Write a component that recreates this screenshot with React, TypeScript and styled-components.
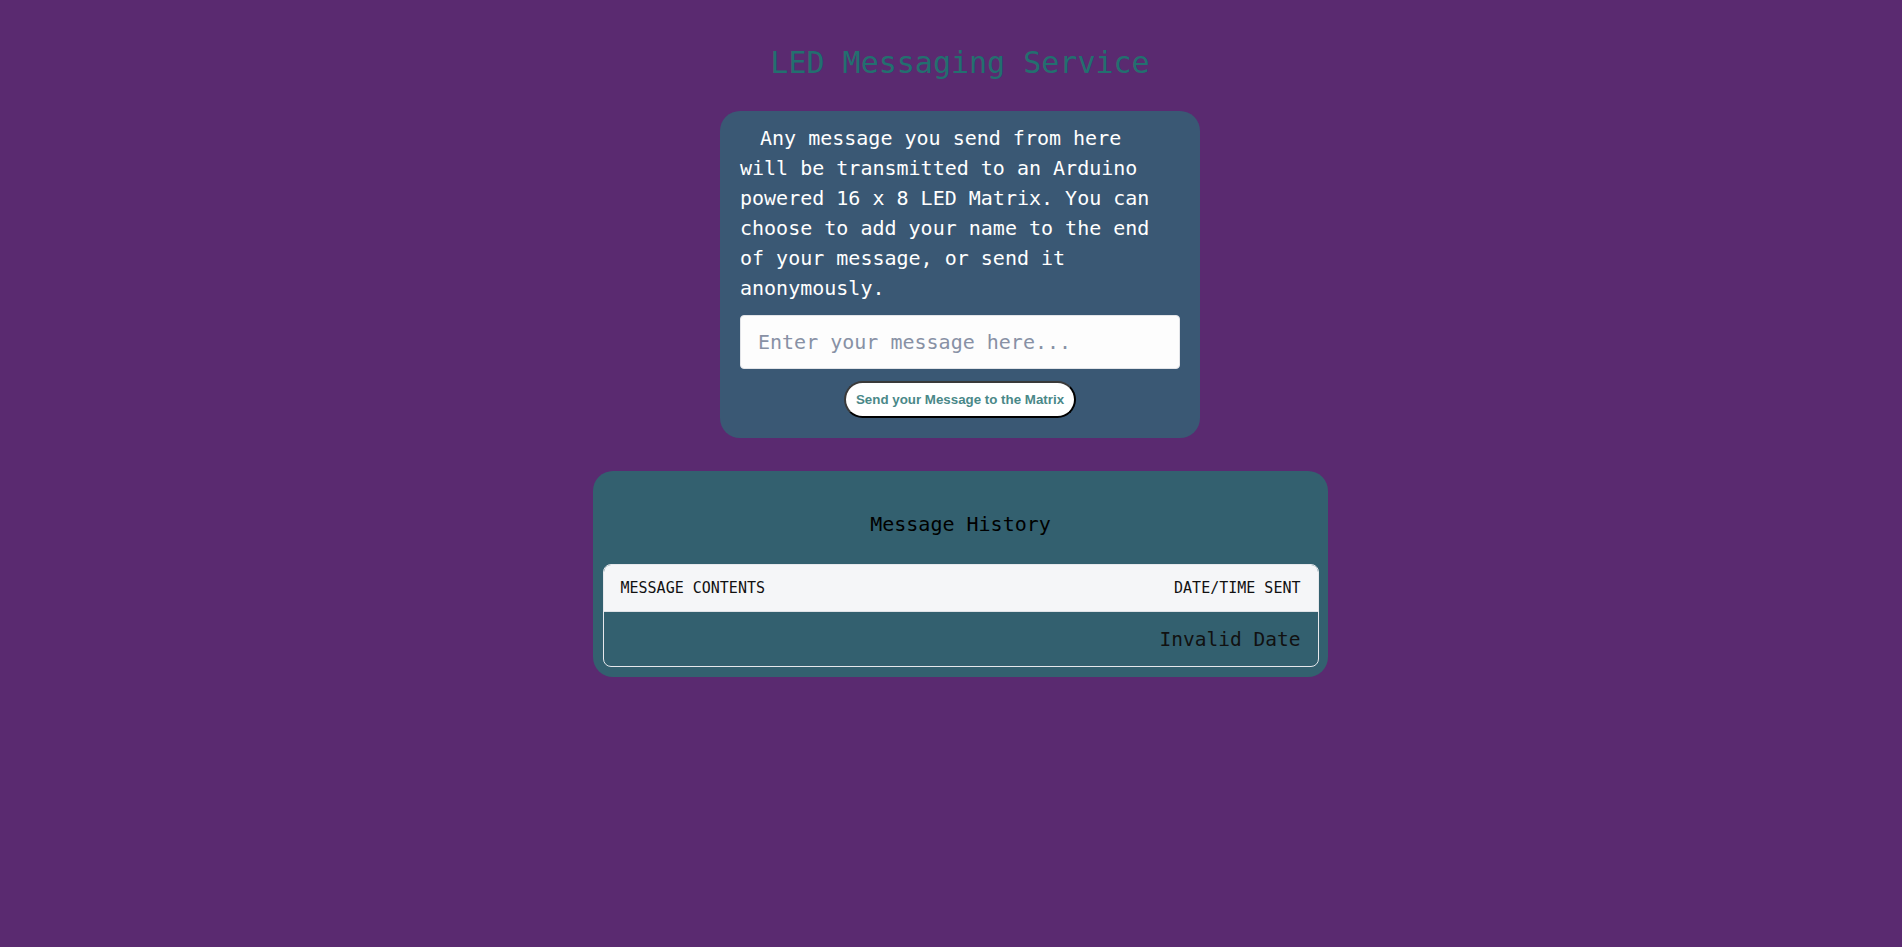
import React from "react";
import styled, { createGlobalStyle } from "styled-components";

const GlobalStyle = createGlobalStyle`
  html, body {
    margin: 0;
    padding: 0;
    background: #5a2a70;
  }
  * { box-sizing: border-box; }
`;

const Page = styled.main`
  min-height: 100vh;
  background: #5a2a70;
  display: flex;
  flex-direction: column;
  align-items: center;
  padding: 45px 0 40px 18px;
  font-family: "DejaVu Sans Mono", "Liberation Mono", monospace;
`;

const Title = styled.h1`
  margin: 0 0 30px;
  font-size: 30px;
  line-height: 36px;
  font-weight: normal;
  color: #236f6f;
`;

const SendCard = styled.section`
  width: 480px;
  background: #3a5874;
  border-radius: 20px;
  padding: 12px 20px 20px;
  display: flex;
  flex-direction: column;
  align-items: center;
`;

const Intro = styled.p`
  margin: 0;
  width: 100%;
  font-size: 20px;
  line-height: 30px;
  color: #ffffff;
  text-indent: 20px;
`;

const MessageInput = styled.input`
  margin-top: 12px;
  width: 100%;
  height: 54px;
  padding: 0 17px;
  border: 1px solid #e2e4e8;
  border-radius: 4px;
  background: #fdfdfd;
  font-family: "DejaVu Sans Mono", "Liberation Mono", monospace;
  font-size: 20px;
  color: #222;
  outline: none;
  &::placeholder {
    color: #8891a5;
  }
`;

const SendButton = styled.button`
  margin-top: 12px;
  padding: 9px 10px;
  background: #ffffff;
  border: 2px outset #3a3a3a;
  border-radius: 20px;
  font-family: "Liberation Sans", Arial, sans-serif;
  font-weight: bold;
  font-size: 13.333px;
  color: #4a8888;
  cursor: pointer;
`;

const HistoryCard = styled.section`
  margin-top: 33px;
  width: 735px;
  background: #33606f;
  border-radius: 20px;
  padding: 10px 9px 10px 10px;
`;

const HistoryTitle = styled.h2`
  margin: 31px 0 28px;
  text-align: center;
  font-size: 20px;
  line-height: 24px;
  font-weight: normal;
  color: #000000;
`;

const Table = styled.table`
  width: 100%;
  border-collapse: separate;
  border-spacing: 0;
  border: 1px solid #e6e8ec;
  border-radius: 8px;
  overflow: hidden;
`;

const HeadCell = styled.th<{ $align: "left" | "right" }>`
  background: #f5f6f8;
  padding: 14px 17px;
  font-size: 15px;
  line-height: 18px;
  font-weight: normal;
  text-transform: uppercase;
  color: #111111;
  text-align: ${(p) => p.$align};
  border-bottom: 1px solid #dfe2e6;
`;

const BodyCell = styled.td<{ $align: "left" | "right" }>`
  padding: 16px 17px 14px;
  font-size: 19.5px;
  line-height: 24px;
  color: #111111;
  text-align: ${(p) => p.$align};
`;

export default function App() {
  return (
    <>
      <GlobalStyle />
      <Page>
        <Title>LED Messaging Service</Title>
        <SendCard>
          <Intro>
            Any message you send from here will be transmitted to an Arduino
            powered 16 x 8 LED Matrix. You can choose to add your name to the
            end of your message, or send it anonymously.
          </Intro>
          <MessageInput placeholder="Enter your message here..." />
          <SendButton>Send your Message to the Matrix</SendButton>
        </SendCard>
        <HistoryCard>
          <HistoryTitle>Message History</HistoryTitle>
          <Table>
            <thead>
              <tr>
                <HeadCell $align="left">Message Contents</HeadCell>
                <HeadCell $align="right">Date/Time Sent</HeadCell>
              </tr>
            </thead>
            <tbody>
              <tr>
                <BodyCell $align="left"></BodyCell>
                <BodyCell $align="right">Invalid Date</BodyCell>
              </tr>
            </tbody>
          </Table>
        </HistoryCard>
      </Page>
    </>
  );
}
